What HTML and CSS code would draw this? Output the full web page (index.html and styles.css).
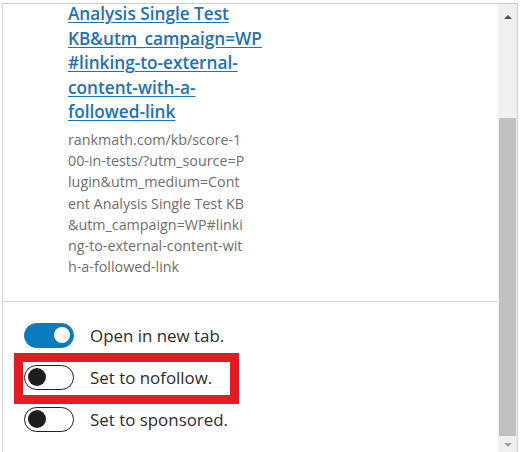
FILE: index.html
```html
<!DOCTYPE html>
<html lang="en">
<head>
<meta charset="utf-8">
<title>Link settings</title>
<link rel="stylesheet" href="styles.css">
</head>
<body>
  <div class="panel">
    <div class="content">
      <div class="details">
        <a class="link" href="#">Analysis Single Test <br>KB&amp;utm_campaign=WP<br>#linking-to-external-<br>content-with-a-<br>followed-link</a>
        <p class="url">rankmath.com/kb/score-1<br>00-in-tests/?utm_source=P<br>lugin&amp;utm_medium=Cont<br>ent Analysis Single Test KB<br>&amp;utm_campaign=WP#linki<br>ng-to-external-content-wit<br>h-a-followed-link</p>
      </div>
      <div class="options">
        <label class="option">
          <span class="toggle is-on"><span class="knob"></span></span>
          <span class="option-label">Open in new tab.</span>
        </label>
        <label class="option">
          <span class="toggle"><span class="knob"></span></span>
          <span class="option-label">Set to nofollow.</span>
        </label>
        <label class="option">
          <span class="toggle"><span class="knob"></span></span>
          <span class="option-label">Set to sponsored.</span>
        </label>
        <div class="highlight"></div>
      </div>
    </div>
    <div class="scrollbar">
      <div class="scroll-btn up"><span class="arrow-up"></span></div>
      <div class="scroll-track">
        <div class="scroll-thumb"></div>
      </div>
      <div class="scroll-btn down"><span class="arrow-down"></span></div>
    </div>
  </div>
</body>
</html>
```

FILE: styles.css
```css
html, body {
  margin: 0;
  height: 100%;
  background: #ffffff;
}

body {
  padding: 3px 3px 0 2px;
  box-sizing: border-box;
  overflow: hidden;
  font-family: "Open Sans", "Noto Sans", sans-serif;
}

.panel {
  display: flex;
  height: 460px;
  border-top: 1px solid #cdcdcd;
  border-left: 1px solid #d4d4d4;
  border-right: 1px solid #cfcfcf;
  overflow: hidden;
}

.content {
  flex: 1;
  display: flex;
  flex-direction: column;
  min-width: 0;
}

.details {
  padding: 0 0 24px 65px;
}

.link {
  display: block;
  margin-top: -2px;
  font-size: 17.2px;
  line-height: 24.6px;
  font-weight: 600;
  color: #2271b1;
  text-decoration: underline;
  text-underline-offset: 2px;
  white-space: nowrap;
}

.url {
  margin: 4px 0 0;
  font-size: 14.3px;
  line-height: 21.2px;
  color: #6e6e6e;
  white-space: nowrap;
}

.options {
  position: relative;
  border-top: 1px solid #d6d6d6;
  padding: 21px 0 0 21px;
  display: flex;
  flex-direction: column;
  gap: 17px;
}

.option {
  display: flex;
  align-items: center;
  gap: 16px;
  height: 25px;
}

.toggle {
  position: relative;
  box-sizing: border-box;
  width: 50px;
  height: 25px;
  border-radius: 13px;
  border: 1.5px solid #1e1e1e;
  background: #ffffff;
  flex: none;
}

.toggle .knob {
  position: absolute;
  top: 2px;
  left: 2.5px;
  width: 18px;
  height: 18px;
  border-radius: 50%;
  background: #1e1e1e;
}

.toggle.is-on {
  background: #0a7bbf;
  border-color: #0a7bbf;
}

.toggle.is-on .knob {
  left: auto;
  right: 3px;
  top: 3px;
  width: 16px;
  height: 16px;
  background: #ffffff;
}

.option-label {
  font-size: 16.9px;
  color: #2c2c2c;
}

/* red annotation frame around the nofollow row */
.highlight {
  position: absolute;
  left: 11px;
  top: 51px;
  width: 225px;
  height: 51px;
  box-sizing: border-box;
  border: 9px solid #e31c24;
}

.scrollbar {
  flex: none;
  width: 20px;
  display: flex;
  flex-direction: column;
  background: #f0f0f0;
  border-left: 1px solid #f7f7f7;
  box-sizing: border-box;
  height: 449px;
}

.scroll-btn {
  height: 17px;
  display: flex;
  align-items: center;
  justify-content: center;
}

.scroll-btn.up {
  height: 26px;
}

.arrow-up {
  width: 0;
  height: 0;
  border-left: 4px solid transparent;
  border-right: 4px solid transparent;
  border-bottom: 4px solid #505050;
}

.arrow-down {
  width: 0;
  height: 0;
  border-left: 4px solid transparent;
  border-right: 4px solid transparent;
  border-top: 4px solid #a3a3a3;
}

.scroll-track {
  flex: 1;
  display: flex;
  flex-direction: column;
  justify-content: flex-end;
  padding: 0 1px;
}

.scroll-thumb {
  height: 318px;
  background: #c1c1c1;
}
```
